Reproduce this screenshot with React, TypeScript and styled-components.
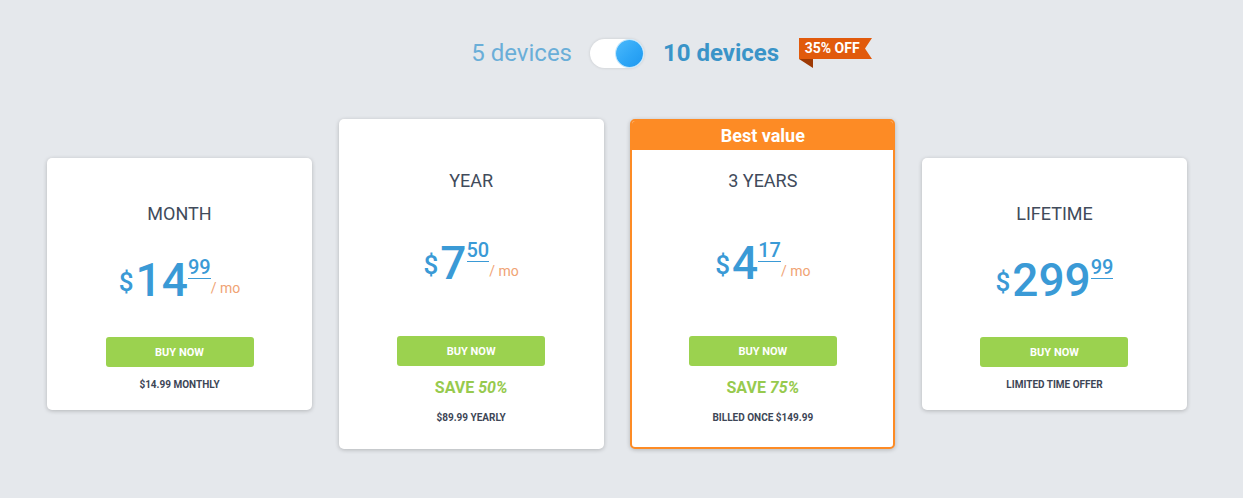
import React from 'react';
import styled, { createGlobalStyle } from 'styled-components';

const Global = createGlobalStyle`
  html, body { margin: 0; padding: 0; background: #e5e8ec; }
  body { font-family: Roboto, "Noto Sans", "Liberation Sans", sans-serif; }
`;

const Page = styled.div`
  width: 1140px;
  margin-left: 47px;
  padding-top: 38px;
  padding-bottom: 40px;
`;

const ToggleRow = styled.div`
  display: grid;
  grid-template-columns: 1fr auto 1fr;
  align-items: center;
  height: 29px;
`;

const Left = styled.div`
  display: flex;
  justify-content: flex-end;
  align-items: center;
  padding-right: 18px;
`;

const Right = styled.div`
  display: flex;
  align-items: center;
  padding-left: 19px;
  gap: 20px;
`;

const DeviceLabel = styled.span<{ $active?: boolean }>`
  font-size: 24px;
  line-height: 29px;
  color: ${(p) => (p.$active ? '#3a94c8' : '#6aaed8')};
  font-weight: ${(p) => (p.$active ? 700 : 400)};
`;

const Switch = styled.div`
  width: 54px;
  height: 29px;
  box-sizing: border-box;
  border-radius: 15px;
  background: #fff;
  box-shadow: 0 0 3px rgba(0, 0, 0, 0.14);
  display: flex;
  justify-content: flex-end;
  align-items: center;
  padding: 0 1px;
`;

const Knob = styled.div`
  width: 27px;
  height: 27px;
  border-radius: 50%;
  background: linear-gradient(135deg, #4cbafc 0%, #2ea6f6 55%, #1e98ef 100%);
  box-shadow: 0 0 0 1px #c4e6fb;
`;

const Badge = styled.span`
  position: relative;
  width: 73px;
  height: 30px;
  display: inline-flex;
  align-items: flex-start;
`;

const BadgeShape = styled.svg`
  position: absolute;
  left: 0;
  top: 0;
`;

const BadgeText = styled.span`
  position: relative;
  width: 66px;
  text-align: center;
  font-size: 14px;
  font-weight: 700;
  line-height: 21px;
  color: #fff;
`;

const Cards = styled.div`
  display: flex;
  align-items: center;
  gap: 26.67px;
  margin-top: 52px;
`;

const Card = styled.div<{ $tall?: boolean; $featured?: boolean }>`
  width: 265px;
  flex: 0 0 265px;
  box-sizing: border-box;
  background: #fff;
  border-radius: 5px;
  box-shadow: 0 1px 4px rgba(0, 0, 0, 0.22);
  display: flex;
  flex-direction: column;
  align-items: center;
  overflow: hidden;
  border: ${(p) => (p.$featured ? '2px solid #fd8b25' : 'none')};
  padding-top: ${(p) => (p.$tall ? (p.$featured ? 0 : 51) : 45)}px;
  padding-bottom: ${(p) => (p.$tall ? (p.$featured ? 23 : 25) : 19)}px;
`;

const Header = styled.div`
  align-self: stretch;
  height: 29px;
  background: #fd8b25;
  color: #fff;
  font-size: 18px;
  font-weight: 700;
  line-height: 29px;
  text-align: center;
  margin-bottom: 20px;
`;

const Title = styled.div`
  font-size: 18px;
  line-height: 21px;
  color: #414b5b;
`;

const Price = styled.div<{ $tall?: boolean }>`
  display: flex;
  align-items: flex-start;
  height: 46px;
  margin-top: ${(p) => (p.$tall ? 49 : 33)}px;
  color: #3a9ad6;
  font-weight: 500;
`;

const Dollar = styled.span`
  font-size: 26px;
  line-height: 26px;
  margin-top: 12px;
  margin-right: 2px;
`;

const Amount = styled.span`
  font-size: 46px;
  line-height: 46px;
`;

const Fraction = styled.div`
  display: grid;
  grid-template-columns: auto auto;
`;

const Cents = styled.span`
  grid-column: 1;
  grid-row: 1;
  font-size: 20px;
  line-height: 20px;
  padding-bottom: 1px;
  border-bottom: 1px solid #3a9ad6;
`;

const PerMonth = styled.span`
  grid-column: 2;
  grid-row: 2;
  font-size: 14px;
  line-height: 14px;
  margin-top: 2px;
  color: #f0a374;
  font-weight: 400;
  white-space: nowrap;
`;

const BuyButton = styled.button<{ $tall?: boolean }>`
  width: 148px;
  height: 30px;
  margin-top: ${(p) => (p.$tall ? 50 : 34)}px;
  border: none;
  border-radius: 3px;
  background: #9bd24f;
  color: #fff;
  font-family: inherit;
  font-size: 11px;
  font-weight: 700;
  padding: 0;
  cursor: pointer;
`;

const Save = styled.div`
  margin-top: 12px;
  font-size: 16px;
  line-height: 19px;
  font-weight: 700;
  color: #97ca4e;
  em { font-style: italic; }
`;

const Note = styled.div<{ $afterSave?: boolean }>`
  margin-top: ${(p) => (p.$afterSave ? 14 : 11)}px;
  font-size: 10px;
  line-height: 13px;
  font-weight: 700;
  color: #3d4656;
`;

type Plan = {
  title: string;
  amount: string;
  cents: string;
  perMonth?: boolean;
  save?: string;
  note: string;
  tall?: boolean;
  featured?: boolean;
};

const plans: Plan[] = [
  { title: 'MONTH', amount: '14', cents: '99', perMonth: true, note: '$14.99 MONTHLY' },
  { title: 'YEAR', amount: '7', cents: '50', perMonth: true, save: '50%', note: '$89.99 YEARLY', tall: true },
  { title: '3 YEARS', amount: '4', cents: '17', perMonth: true, save: '75%', note: 'BILLED ONCE $149.99', tall: true, featured: true },
  { title: 'LIFETIME', amount: '299', cents: '99', note: 'LIMITED TIME OFFER' },
];

export default function App() {
  return (
    <>
      <Global />
      <Page>
        <ToggleRow>
          <Left>
            <DeviceLabel>5 devices</DeviceLabel>
          </Left>
          <Switch>
            <Knob />
          </Switch>
          <Right>
            <DeviceLabel $active>10 devices</DeviceLabel>
            <Badge>
              <BadgeShape width="73" height="30" viewBox="0 0 73 30">
                <polygon points="0,0 73,0 66,10.5 73,21 0,21" fill="#e15a0c" />
                <polygon points="0,21 14,21 14,30" fill="#9e3a05" />
              </BadgeShape>
              <BadgeText>35% OFF</BadgeText>
            </Badge>
          </Right>
        </ToggleRow>
        <Cards>
          {plans.map((p) => (
            <Card key={p.title} $tall={p.tall} $featured={p.featured}>
              {p.featured && <Header>Best value</Header>}
              <Title>{p.title}</Title>
              <Price $tall={p.tall}>
                <Dollar>$</Dollar>
                <Amount>{p.amount}</Amount>
                <Fraction>
                  <Cents>{p.cents}</Cents>
                  {p.perMonth && <PerMonth>/ mo</PerMonth>}
                </Fraction>
              </Price>
              <BuyButton $tall={p.tall}>BUY NOW</BuyButton>
              {p.save && (
                <Save>
                  SAVE <em>{p.save}</em>
                </Save>
              )}
              <Note $afterSave={!!p.save}>{p.note}</Note>
            </Card>
          ))}
        </Cards>
      </Page>
    </>
  );
}
